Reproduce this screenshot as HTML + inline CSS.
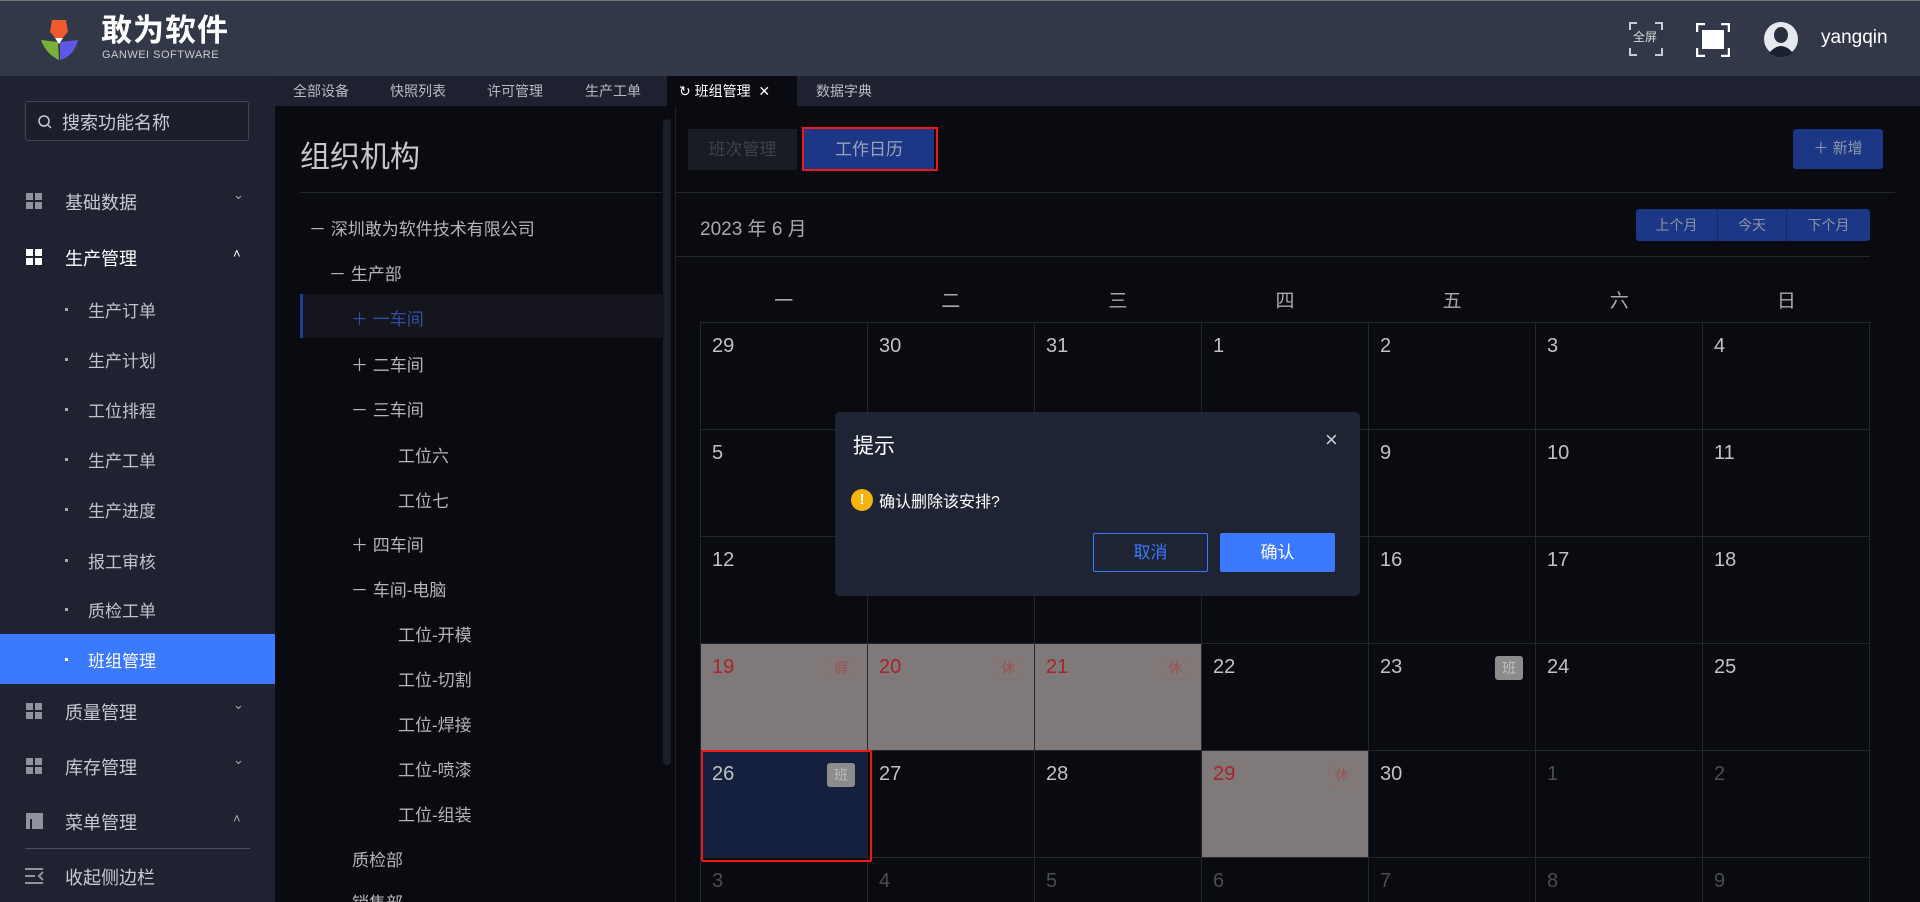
<!DOCTYPE html>
<html style="width:1920px;height:902px;overflow:hidden"><head><meta charset="utf-8"><style>
*{margin:0;padding:0;box-sizing:border-box}
html,body{width:1920px;height:902px;overflow:hidden}
body{background:#0a0b10;font-family:"Liberation Sans","Noto Sans CJK SC",sans-serif;color:#bbb}
#wrap{position:relative;width:1920px;height:902px;overflow:hidden}
.a{position:absolute;white-space:nowrap}
#hd{position:absolute;left:0;top:0;width:1920px;height:76px;background:#323848;border-top:1px solid #777}
#sb{position:absolute;left:0;top:76px;width:275px;height:826px;background:#1f2331}
#tb{position:absolute;left:275px;top:76px;width:1645px;height:30px;background:#1d2130}
.tab{position:absolute;top:0;height:30px;line-height:30px;font-size:14px;color:#b8bcc6}
.mi{position:absolute;left:0;width:275px;font-size:18px;color:#c7cad2}
.sq{position:absolute;left:26px;width:16px;height:16px}
.sq i{position:absolute;width:7px;height:7px;background:#8e939e}
.sub{position:absolute;left:88px;font-size:17px;color:#c0c3cb}
.dot{position:absolute;left:65px;width:3px;height:3px;background:#aaa}
.tr{position:absolute;font-size:17px;color:#b5b5b5}
.cell{position:absolute;width:167px;height:107px;border-right:1px solid #23262e;border-bottom:1px solid #23262e;font-size:20px;color:#c2c2c2;padding:12px 0 0 11px}
.g{background:#7f7979;color:#a8242a}
.dim{color:#4b4d54}
.bd{position:absolute;right:12px;top:12px;width:28px;height:24px;border:1px solid #8f7070;border-radius:3px;font-size:14px;color:#9c5050;text-align:center;line-height:22px}
.bb{background:#8c8c8c;border-color:#8c8c8c;color:#bbb}
</style></head><body><div id="wrap">
<div id="hd">
 <svg class="a" style="left:38px;top:17px" width="50" height="44" viewBox="0 0 50 44">
  <path d="M14 2 L28 2 L30 14 L21 24 L12 14 Z" fill="#ef5a2e"/>
  <path d="M3 22 L20 24 L21 42 Q8 36 3 22Z" fill="#7ab03a"/>
  <path d="M22 24 L40 22 Q36 38 22 42Z" fill="#5f58e6"/>
  <path d="M17 20 L21 26 L25 20Z" fill="#fff"/>
 </svg>
 <div class="a" style="left:101px;top:13px;font-size:31px;line-height:34px;font-weight:bold;color:#fff;letter-spacing:1px">敢为软件</div>
 <div class="a" style="left:102px;top:48px;font-size:11px;line-height:12px;color:#ccc;letter-spacing:.5px">GANWEI SOFTWARE</div>
 <svg class="a" style="left:1629px;top:21px" width="34" height="34" viewBox="0 0 34 34" fill="none" stroke="#c9ccd4" stroke-width="2"><path d="M1 8V1h7M26 1h7v7M33 26v7h-7M8 33H1v-7"/></svg>
 <div class="a" style="left:1633px;top:29px;font-size:12px;line-height:14px;color:#d8dae0">全屏</div>
 <svg class="a" style="left:1696px;top:22px" width="34" height="34" viewBox="0 0 34 34" fill="none" stroke="#fff" stroke-width="2.5"><path d="M1 9V1h8M25 1h8v8M33 25v8h-8M9 33H1v-8"/><rect x="6" y="7" width="22" height="19" fill="#fff" stroke="none"/></svg>
 <svg class="a" style="left:1763px;top:20px" width="36" height="36" viewBox="0 0 36 36"><circle cx="18" cy="18" r="17" fill="#e6e9ef"/><ellipse cx="18" cy="14" rx="7" ry="8" fill="#2a2f3e"/><path d="M6 32 Q18 18 30 32 Q18 40 6 32Z" fill="#1b2030"/></svg>
 <div class="a" style="left:1821px;top:26px;font-size:19px;color:#fff">yangqin</div>
</div>
<div id="sb">
 <div class="a" style="left:25px;top:25px;width:224px;height:40px;border:1px solid #3f4658;border-radius:3px;background:#1b1f2c"></div>
 <svg class="a" style="left:37px;top:38px" width="16" height="16" viewBox="0 0 16 16" fill="none" stroke="#ccc" stroke-width="1.5"><circle cx="7" cy="7" r="5"/><path d="M11 11l3 3"/></svg>
 <div class="a" style="left:62px;top:33px;font-size:18px;color:#c9ccd4">搜索功能名称</div>
 <div class="sq" style="top:117px"><i style="left:0;top:0"></i><i style="left:9px;top:0"></i><i style="left:0;top:9px"></i><i style="left:9px;top:9px"></i></div>
 <div class="mi a" style="left:65px;width:auto;top:113px">基础数据</div><div class="a" style="left:233px;top:111px;font-size:13px;color:#aaa">⌄</div>
 <div class="sq" style="top:173px"><i style="left:0;top:0;background:#fff"></i><i style="left:9px;top:0;background:#fff"></i><i style="left:0;top:9px;background:#fff"></i><i style="left:9px;top:9px;background:#fff"></i></div>
 <div class="mi a" style="left:65px;width:auto;top:169px;color:#fff">生产管理</div><div class="a" style="left:233px;top:170px;font-size:13px;color:#fff">˄</div>
 <div class="dot" style="top:232px"></div><div class="sub a" style="top:221px">生产订单</div>
 <div class="dot" style="top:282px"></div><div class="sub a" style="top:271px">生产计划</div>
 <div class="dot" style="top:332px"></div><div class="sub a" style="top:321px">工位排程</div>
 <div class="dot" style="top:382px"></div><div class="sub a" style="top:371px">生产工单</div>
 <div class="dot" style="top:432px"></div><div class="sub a" style="top:421px">生产进度</div>
 <div class="dot" style="top:483px"></div><div class="sub a" style="top:472px">报工审核</div>
 <div class="dot" style="top:532px"></div><div class="sub a" style="top:521px">质检工单</div>
 <div class="a" style="left:0;top:558px;width:275px;height:50px;background:#3b79ff"></div>
 <div class="dot" style="top:582px;background:#fff"></div><div class="sub a" style="top:571px;color:#fff">班组管理</div>
 <div class="sq" style="top:627px"><i style="left:0;top:0"></i><i style="left:9px;top:0"></i><i style="left:0;top:9px"></i><i style="left:9px;top:9px"></i></div>
 <div class="mi a" style="left:65px;width:auto;top:623px">质量管理</div><div class="a" style="left:233px;top:621px;font-size:13px;color:#aaa">⌄</div>
 <div class="sq" style="top:682px"><i style="left:0;top:0"></i><i style="left:9px;top:0"></i><i style="left:0;top:9px"></i><i style="left:9px;top:9px"></i></div>
 <div class="mi a" style="left:65px;width:auto;top:678px">库存管理</div><div class="a" style="left:233px;top:676px;font-size:13px;color:#aaa">⌄</div>
 <div class="a" style="left:26px;top:737px;width:17px;height:16px;background:#8e939e;border-top:4px solid #8e939e"><i style="position:absolute;left:4px;top:2px;width:2px;height:10px;background:#1f2331"></i></div>
 <div class="mi a" style="left:65px;width:auto;top:733px">菜单管理</div><div class="a" style="left:233px;top:735px;font-size:13px;color:#aaa">˄</div>
 <div class="a" style="left:25px;top:772px;width:225px;height:1px;background:#4a5062"></div>
 <svg class="a" style="left:25px;top:791px" width="20" height="18" viewBox="0 0 20 18" stroke="#8e939e" stroke-width="2" fill="none"><path d="M0 2h18M0 9h10M0 16h18M18 5l-4 4 4 4"/></svg>
 <div class="mi a" style="left:65px;width:auto;top:788px">收起侧边栏</div>
</div>
<div id="tb">
 <div class="tab" style="left:18px">全部设备</div>
 <div class="tab" style="left:115px">快照列表</div>
 <div class="tab" style="left:212px">许可管理</div>
 <div class="tab" style="left:310px">生产工单</div>
 <div class="tab" style="left:392px;width:130px;background:#0a0b10;color:#fff;padding-left:12px">↻ 班组管理 &nbsp;✕</div>
 <div class="tab" style="left:541px">数据字典</div>
</div>
<div class="a" style="left:300px;top:132px;font-size:30px;color:#c7c7c7">组织机构</div>
<div class="a" style="left:300px;top:192px;width:362px;height:1px;background:#23262e"></div>
<div class="a" style="left:663px;top:119px;width:8px;height:646px;background:#1c1f28;border-radius:4px"></div>
<div class="a" style="left:675px;top:106px;width:1px;height:796px;background:#1d2028"></div>
<div class="a" style="left:300px;top:294px;width:364px;height:44px;background:#15161d;border-left:3px solid #1f3e9a"></div>
<div class="tr a" style="left:309px;top:215px">－ 深圳敢为软件技术有限公司</div>
<div class="tr a" style="left:329px;top:260px">－ 生产部</div>
<div class="tr a" style="left:351px;top:305px;color:#2f4fa8">＋ 一车间</div>
<div class="tr a" style="left:351px;top:351px">＋ 二车间</div>
<div class="tr a" style="left:351px;top:396px">－ 三车间</div>
<div class="tr a" style="left:398px;top:442px">工位六</div>
<div class="tr a" style="left:398px;top:487px">工位七</div>
<div class="tr a" style="left:351px;top:531px">＋ 四车间</div>
<div class="tr a" style="left:351px;top:576px">－ 车间-电脑</div>
<div class="tr a" style="left:398px;top:621px">工位-开模</div>
<div class="tr a" style="left:398px;top:666px">工位-切割</div>
<div class="tr a" style="left:398px;top:711px">工位-焊接</div>
<div class="tr a" style="left:398px;top:756px">工位-喷漆</div>
<div class="tr a" style="left:398px;top:801px">工位-组装</div>
<div class="tr a" style="left:352px;top:846px">质检部</div>
<div class="tr a" style="left:352px;top:889px">销售部</div>
<div class="a" style="left:688px;top:129px;width:109px;height:41px;background:#1a1c24;color:#3e414a;font-size:17px;text-align:center;line-height:41px">班次管理</div>
<div class="a" style="left:804px;top:129px;width:130px;height:41px;background:#1c3785;color:#9aa3b8;font-size:17px;text-align:center;line-height:41px">工作日历</div>
<div class="a" style="left:802px;top:127px;width:136px;height:44px;border:2px solid #f01818"></div>
<div class="a" style="left:1793px;top:129px;width:90px;height:40px;background:#1c3785;border-radius:3px;color:#8d95a8;font-size:15px;text-align:center;line-height:40px">＋ 新增</div>
<div class="a" style="left:675px;top:192px;width:1220px;height:1px;background:#23262e"></div>
<div class="a" style="left:700px;top:214px;font-size:19px;color:#aaa">2023 年 6 月</div>
<div class="a" style="left:1636px;top:209px;width:234px;height:32px;background:#1c3785;border-radius:3px"></div>
<div class="a" style="left:1636px;top:209px;width:82px;height:32px;line-height:32px;text-align:center;font-size:14px;color:#8d95a8;border-right:1px solid #142a66">上个月</div>
<div class="a" style="left:1718px;top:209px;width:69px;height:32px;line-height:32px;text-align:center;font-size:14px;color:#8d95a8;border-right:1px solid #142a66">今天</div>
<div class="a" style="left:1787px;top:209px;width:83px;height:32px;line-height:32px;text-align:center;font-size:14px;color:#8d95a8">下个月</div>
<div class="a" style="left:675px;top:256px;width:1195px;height:1px;background:#23262e"></div>
<div class="a" style="left:700px;top:286px;width:1170px;font-size:19px;color:#aaa;display:flex"><span style="flex:1;text-align:center">一</span><span style="flex:1;text-align:center">二</span><span style="flex:1;text-align:center">三</span><span style="flex:1;text-align:center">四</span><span style="flex:1;text-align:center">五</span><span style="flex:1;text-align:center">六</span><span style="flex:1;text-align:center">日</span></div>
<div class="a" style="left:700px;top:322px;width:1171px;height:580px;border-top:1px solid #23262e;border-left:1px solid #23262e;overflow:hidden">
 <div class="cell" style="left:0;top:0">29</div><div class="cell" style="left:167px;top:0">30</div><div class="cell" style="left:334px;top:0">31</div><div class="cell" style="left:501px;top:0">1</div><div class="cell" style="left:668px;top:0">2</div><div class="cell" style="left:835px;top:0">3</div><div class="cell" style="left:1002px;top:0">4</div>
 <div class="cell" style="left:0;top:107px">5</div><div class="cell" style="left:167px;top:107px">6</div><div class="cell" style="left:334px;top:107px">7</div><div class="cell" style="left:501px;top:107px">8</div><div class="cell" style="left:668px;top:107px">9</div><div class="cell" style="left:835px;top:107px">10</div><div class="cell" style="left:1002px;top:107px">11</div>
 <div class="cell" style="left:0;top:214px">12</div><div class="cell" style="left:167px;top:214px">13</div><div class="cell" style="left:334px;top:214px">14</div><div class="cell" style="left:501px;top:214px">15</div><div class="cell" style="left:668px;top:214px">16</div><div class="cell" style="left:835px;top:214px">17</div><div class="cell" style="left:1002px;top:214px">18</div>
 <div class="cell g" style="left:0;top:321px">19<div class="bd">假</div></div><div class="cell g" style="left:167px;top:321px">20<div class="bd">休</div></div><div class="cell g" style="left:334px;top:321px">21<div class="bd">休</div></div><div class="cell" style="left:501px;top:321px">22</div><div class="cell" style="left:668px;top:321px">23<div class="bd bb">班</div></div><div class="cell" style="left:835px;top:321px">24</div><div class="cell" style="left:1002px;top:321px">25</div>
 <div class="cell" style="left:0;top:428px;background:#14203e">26<div class="bd bb">班</div></div><div class="cell" style="left:167px;top:428px">27</div><div class="cell" style="left:334px;top:428px">28</div><div class="cell g" style="left:501px;top:428px">29<div class="bd">休</div></div><div class="cell" style="left:668px;top:428px">30</div><div class="cell dim" style="left:835px;top:428px">1</div><div class="cell dim" style="left:1002px;top:428px">2</div>
 <div class="cell dim" style="left:0;top:535px">3</div><div class="cell dim" style="left:167px;top:535px">4</div><div class="cell dim" style="left:334px;top:535px">5</div><div class="cell dim" style="left:501px;top:535px">6</div><div class="cell dim" style="left:668px;top:535px">7</div><div class="cell dim" style="left:835px;top:535px">8</div><div class="cell dim" style="left:1002px;top:535px">9</div>
 <div class="a" style="left:0;top:427px;width:171px;height:112px;border:2px solid #f01818;border-radius:2px"></div>
</div>
<div class="a" style="left:835px;top:412px;width:525px;height:184px;background:#1f2434;border-radius:5px">
 <div class="a" style="left:18px;top:18px;font-size:21px;color:#fff">提示</div>
 <div class="a" style="left:490px;top:15px;font-size:22px;color:#ccc">×</div>
 <div class="a" style="left:16px;top:77px;width:22px;height:22px;border-radius:50%;background:#f5b40f;color:#fff;font-size:15px;font-weight:bold;text-align:center;line-height:22px">!</div>
 <div class="a" style="left:44px;top:76px;font-size:16px;color:#fff">确认删除该安排?</div>
 <div class="a" style="left:258px;top:121px;width:115px;height:39px;border:1px solid #3b79ff;border-radius:2px;color:#3b79ff;font-size:17px;text-align:center;line-height:37px">取消</div>
 <div class="a" style="left:385px;top:121px;width:115px;height:39px;background:#3b79ff;border-radius:2px;color:#fff;font-size:17px;text-align:center;line-height:39px">确认</div>
</div>
</div></body></html>
